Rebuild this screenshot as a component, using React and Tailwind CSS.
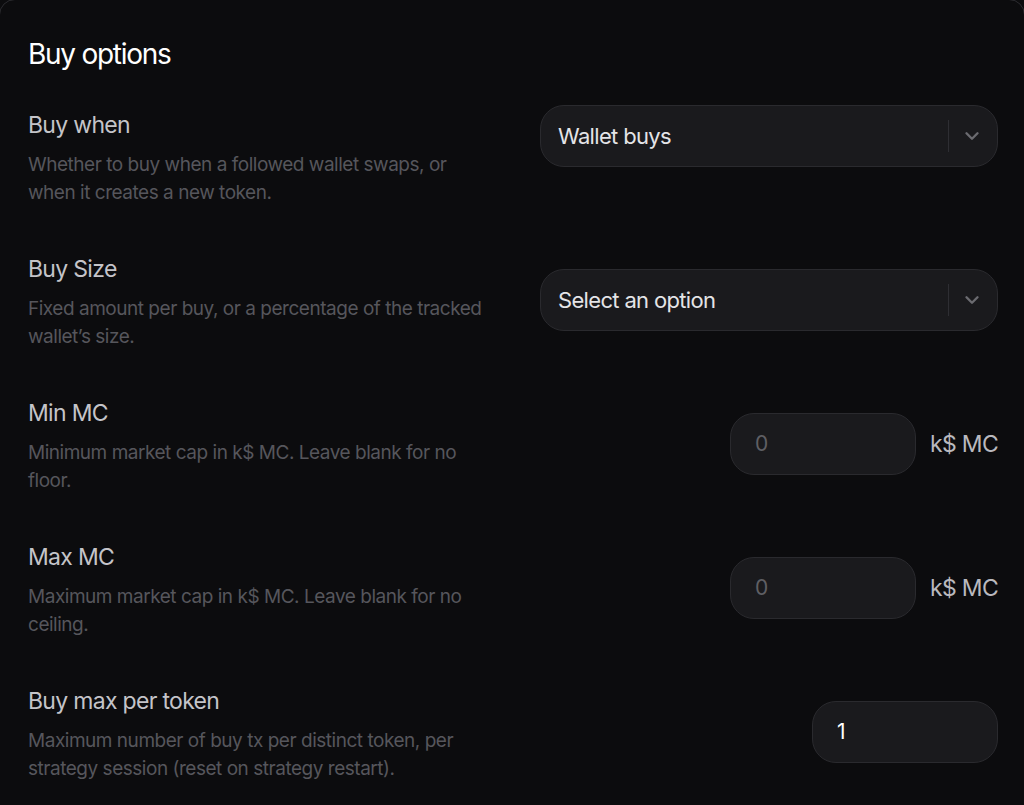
import React from "react";

const font = { fontFamily: "Inter, 'Liberation Sans', sans-serif" };

function Chevron() {
  return (
    <svg width="22" height="22" viewBox="0 0 24 24" fill="none" stroke="currentColor" strokeWidth="2.6" strokeLinecap="round" strokeLinejoin="round">
      <path d="M6 9l6 6 6-6" />
    </svg>
  );
}

function SelectBox({ value, offset }) {
  return (
    <div className={`${offset} w-[458px] h-[62px] rounded-[24px] bg-[#1a1a1d] border border-[#2a2a2e] flex items-center pl-[17px] pr-[14px]`}>
      <span className="flex-1 text-[22px] tracking-[-0.03em] text-[#e4e4e7]">{value}</span>
      <div className="w-px h-[32px] bg-[#2e2e33]" />
      <span className="ml-[12px] text-[#6b6b70] flex items-center">
        <Chevron />
      </span>
    </div>
  );
}

function NumberBox({ value, placeholder, unit, width }) {
  return (
    <div className="mt-[14px] flex items-center gap-[14px]">
      <div className={`${width} h-[62px] rounded-[24px] bg-[#1a1a1d] border border-[#2a2a2e] flex items-center pl-[24px]`}>
        {value ? (
          <span className="text-[21px] text-white">{value}</span>
        ) : (
          <span className="text-[21px] text-[#5f5f64]">{placeholder}</span>
        )}
      </div>
      {unit && <span className="text-[23px] tracking-[-0.03em] text-[#b9b9be]">{unit}</span>}
    </div>
  );
}

function Row({ label, desc, children }) {
  return (
    <div className="flex items-start justify-between">
      <div className="w-[455px]">
        <div className="text-[23px] leading-[28px] tracking-[-0.03em] text-[#c4c4c9]">{label}</div>
        <div className="mt-[12px] text-[19px] leading-[28px] tracking-[-0.025em] text-[#56565c]">{desc}</div>
      </div>
      {children}
    </div>
  );
}

export default function App() {
  return (
    <div className="w-[1024px] h-[805px] overflow-hidden bg-[#0c0c0e]" style={font}>
      <div className="-mx-px -mt-px h-[830px] rounded-2xl border border-[#2c2c30] bg-[#0c0c0e] pl-[28px] pr-[26px] pt-[36px]">
        <h1 className="text-[28px] leading-[36px] tracking-[-0.045em] text-white">Buy options</h1>
        <div className="mt-[39px] flex flex-col gap-[48px]">
          <Row label="Buy when" desc="Whether to buy when a followed wallet swaps, or when it creates a new token.">
            <SelectBox value="Wallet buys" offset="-mt-[6px]" />
          </Row>
          <Row label="Buy Size" desc="Fixed amount per buy, or a percentage of the tracked wallet’s size.">
            <SelectBox value="Select an option" offset="mt-[14px]" />
          </Row>
          <Row label="Min MC" desc="Minimum market cap in k$ MC. Leave blank for no floor.">
            <NumberBox placeholder="0" unit="k$ MC" width="w-[186px]" />
          </Row>
          <Row label="Max MC" desc="Maximum market cap in k$ MC. Leave blank for no ceiling.">
            <NumberBox placeholder="0" unit="k$ MC" width="w-[186px]" />
          </Row>
          <Row label="Buy max per token" desc="Maximum number of buy tx per distinct token, per strategy session (reset on strategy restart).">
            <NumberBox value="1" width="w-[186px]" />
          </Row>
        </div>
      </div>
    </div>
  );
}
